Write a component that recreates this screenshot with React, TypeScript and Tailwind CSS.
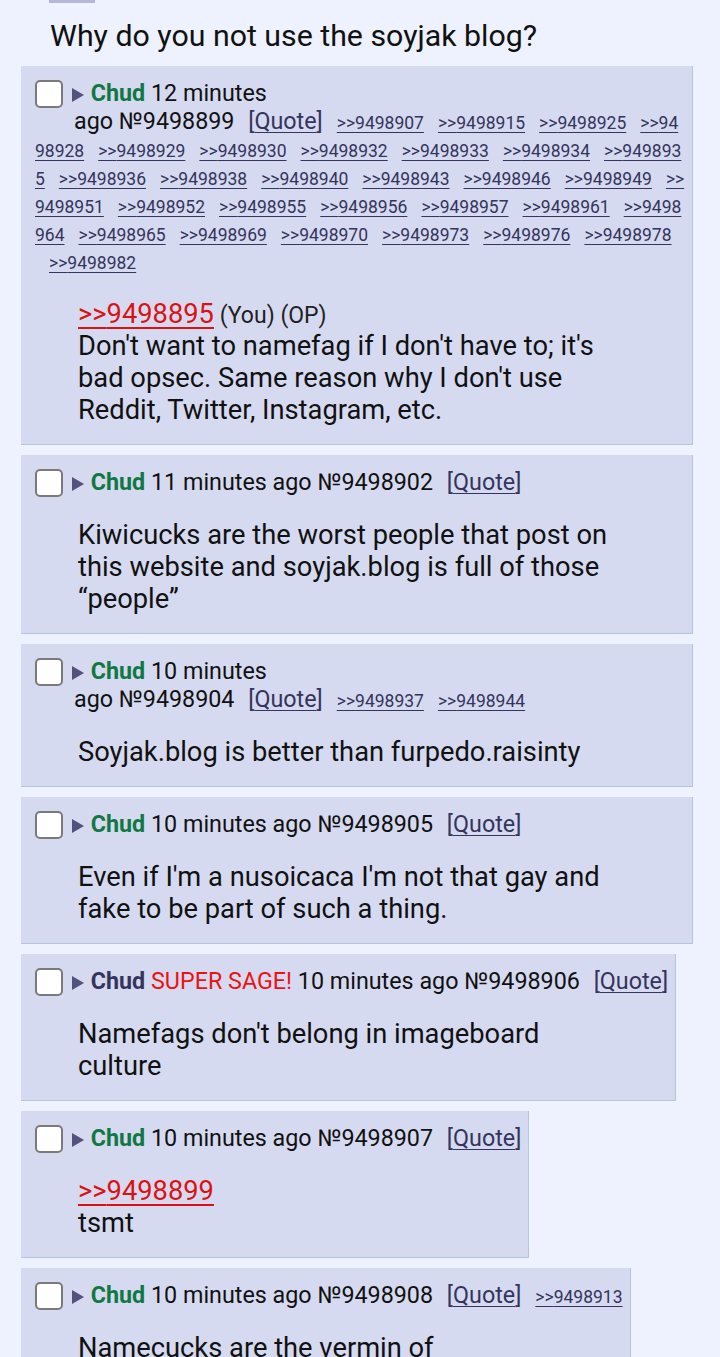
import React from "react";

type Line =
  | { kind: "ref"; to: number; you?: boolean; op?: boolean }
  | { kind: "text"; text: string };

type Post = {
  no: number;
  time: [string, string];
  sage?: boolean;
  split?: boolean;
  backlinks?: number[];
  body: Line[];
};

const posts: Post[] = [
  {
    no: 9498899,
    time: ["12 minutes", "ago"],
    split: true,
    backlinks: [
      9498907, 9498915, 9498925, 9498928, 9498929, 9498930, 9498932, 9498933, 9498934, 9498935,
      9498936, 9498938, 9498940, 9498943, 9498946, 9498949, 9498951, 9498952, 9498955, 9498956,
      9498957, 9498961, 9498964, 9498965, 9498969, 9498970, 9498973, 9498976, 9498978, 9498982,
    ],
    body: [
      { kind: "ref", to: 9498895, you: true, op: true },
      {
        kind: "text",
        text: "Don't want to namefag if I don't have to; it's bad opsec. Same reason why I don't use Reddit, Twitter, Instagram, etc.",
      },
    ],
  },
  {
    no: 9498902,
    time: ["11 minutes", "ago"],
    body: [
      {
        kind: "text",
        text: "Kiwicucks are the worst people that post on this website and soyjak.blog is full of those \u201cpeople\u201d",
      },
    ],
  },
  {
    no: 9498904,
    time: ["10 minutes", "ago"],
    split: true,
    backlinks: [9498937, 9498944],
    body: [{ kind: "text", text: "Soyjak.blog is better than furpedo.raisinty" }],
  },
  {
    no: 9498905,
    time: ["10 minutes", "ago"],
    body: [{ kind: "text", text: "Even if I'm a nusoicaca I'm not that gay and fake to be part of such a thing." }],
  },
  {
    no: 9498906,
    time: ["10 minutes", "ago"],
    sage: true,
    body: [{ kind: "text", text: "Namefags don't belong in imageboard culture" }],
  },
  {
    no: 9498907,
    time: ["10 minutes", "ago"],
    body: [
      { kind: "ref", to: 9498899 },
      { kind: "text", text: "tsmt" },
    ],
  },
  {
    no: 9498908,
    time: ["10 minutes", "ago"],
    backlinks: [9498913],
    body: [{ kind: "text", text: "Namecucks are the vermin of\nimageboards." }],
  },
];

function Reply({ post }: { post: Post }) {
  return (
    <div
      className={`${post.split ? "w-[672px]" : "w-fit"} max-w-[672px] border-r border-b border-[#b7c5d9] bg-[#d6daf0]`}
    >
      {/* intro line */}
      <div className="break-all pt-[13px] pr-[7px] pl-[14px] text-[23.3px] leading-[28px] text-[#111]">
        <span className="float-left mt-[1px] mr-[11px] box-border h-[28px] w-[28px] rounded-[5px] border-2 border-[#7a7a7a] bg-white" />
        <svg className="-ml-[2px] mr-[1px] inline-block align-[-1px]" width="12" height="14" viewBox="0 0 12 14">
          <path d="M0 0 L12 7 L0 14 Z" fill="#52527c" />
        </svg>{" "}
        <span className={post.sage ? "font-bold text-[#34345c]" : "font-bold text-[#117743]"}>Chud</span>{" "}
        {post.sage && <span className="text-[#ee1111]">SUPER SAGE! </span>}
        {post.time[0]}
        {post.split ? <br /> : " "}
        {post.time[1]} №{post.no}{" "}
        <span className="ml-[8px] text-[#34345c]">
          [<span className="underline decoration-1 underline-offset-[3px]">Quote</span>]
        </span>
        {post.backlinks?.map((b) => (
          <a
            key={b}
            className="ml-[14px] text-[17.5px] leading-[20px] text-[#34345c] underline decoration-1 underline-offset-[3px]"
          >
            &gt;&gt;{b}
          </a>
        ))}
      </div>

      <div className="mt-[23px] mb-[18px] ml-[57px] max-w-[80%] whitespace-pre-line text-[27.3px] leading-[32px] text-[#111]">
        {post.body.map((l, i) =>
          l.kind === "ref" ? (
            <div key={i}>
              <a className="text-[#dd1111] underline decoration-2 underline-offset-[4px]">&gt;&gt;{l.to}</a>
              {l.you && <span className="text-[23px] leading-[20px] text-[#222]"> (You)</span>}
              {l.op && <span className="text-[23px] leading-[20px] text-[#222]"> (OP)</span>}
            </div>
          ) : (
            <div key={i}>{l.text}</div>
          )
        )}
      </div>
    </div>
  );
}

export default function App() {
  return (
    <div className="min-h-screen bg-[#eef2ff] font-['Roboto',sans-serif]">
      <div className="ml-[49px] h-[3px] w-[46px] bg-[#b4b8d6]" />
      <h1 className="mt-[17px] pl-[50px] text-[30.3px] leading-[32px] font-normal text-[#111]">
        Why do you not use the soyjak blog?
      </h1>

      <div className="mt-[14px] flex flex-col items-start gap-[10px] pl-[21px]">
        {posts.map((p) => (
          <Reply key={p.no} post={p} />
        ))}
      </div>
    </div>
  );
}
